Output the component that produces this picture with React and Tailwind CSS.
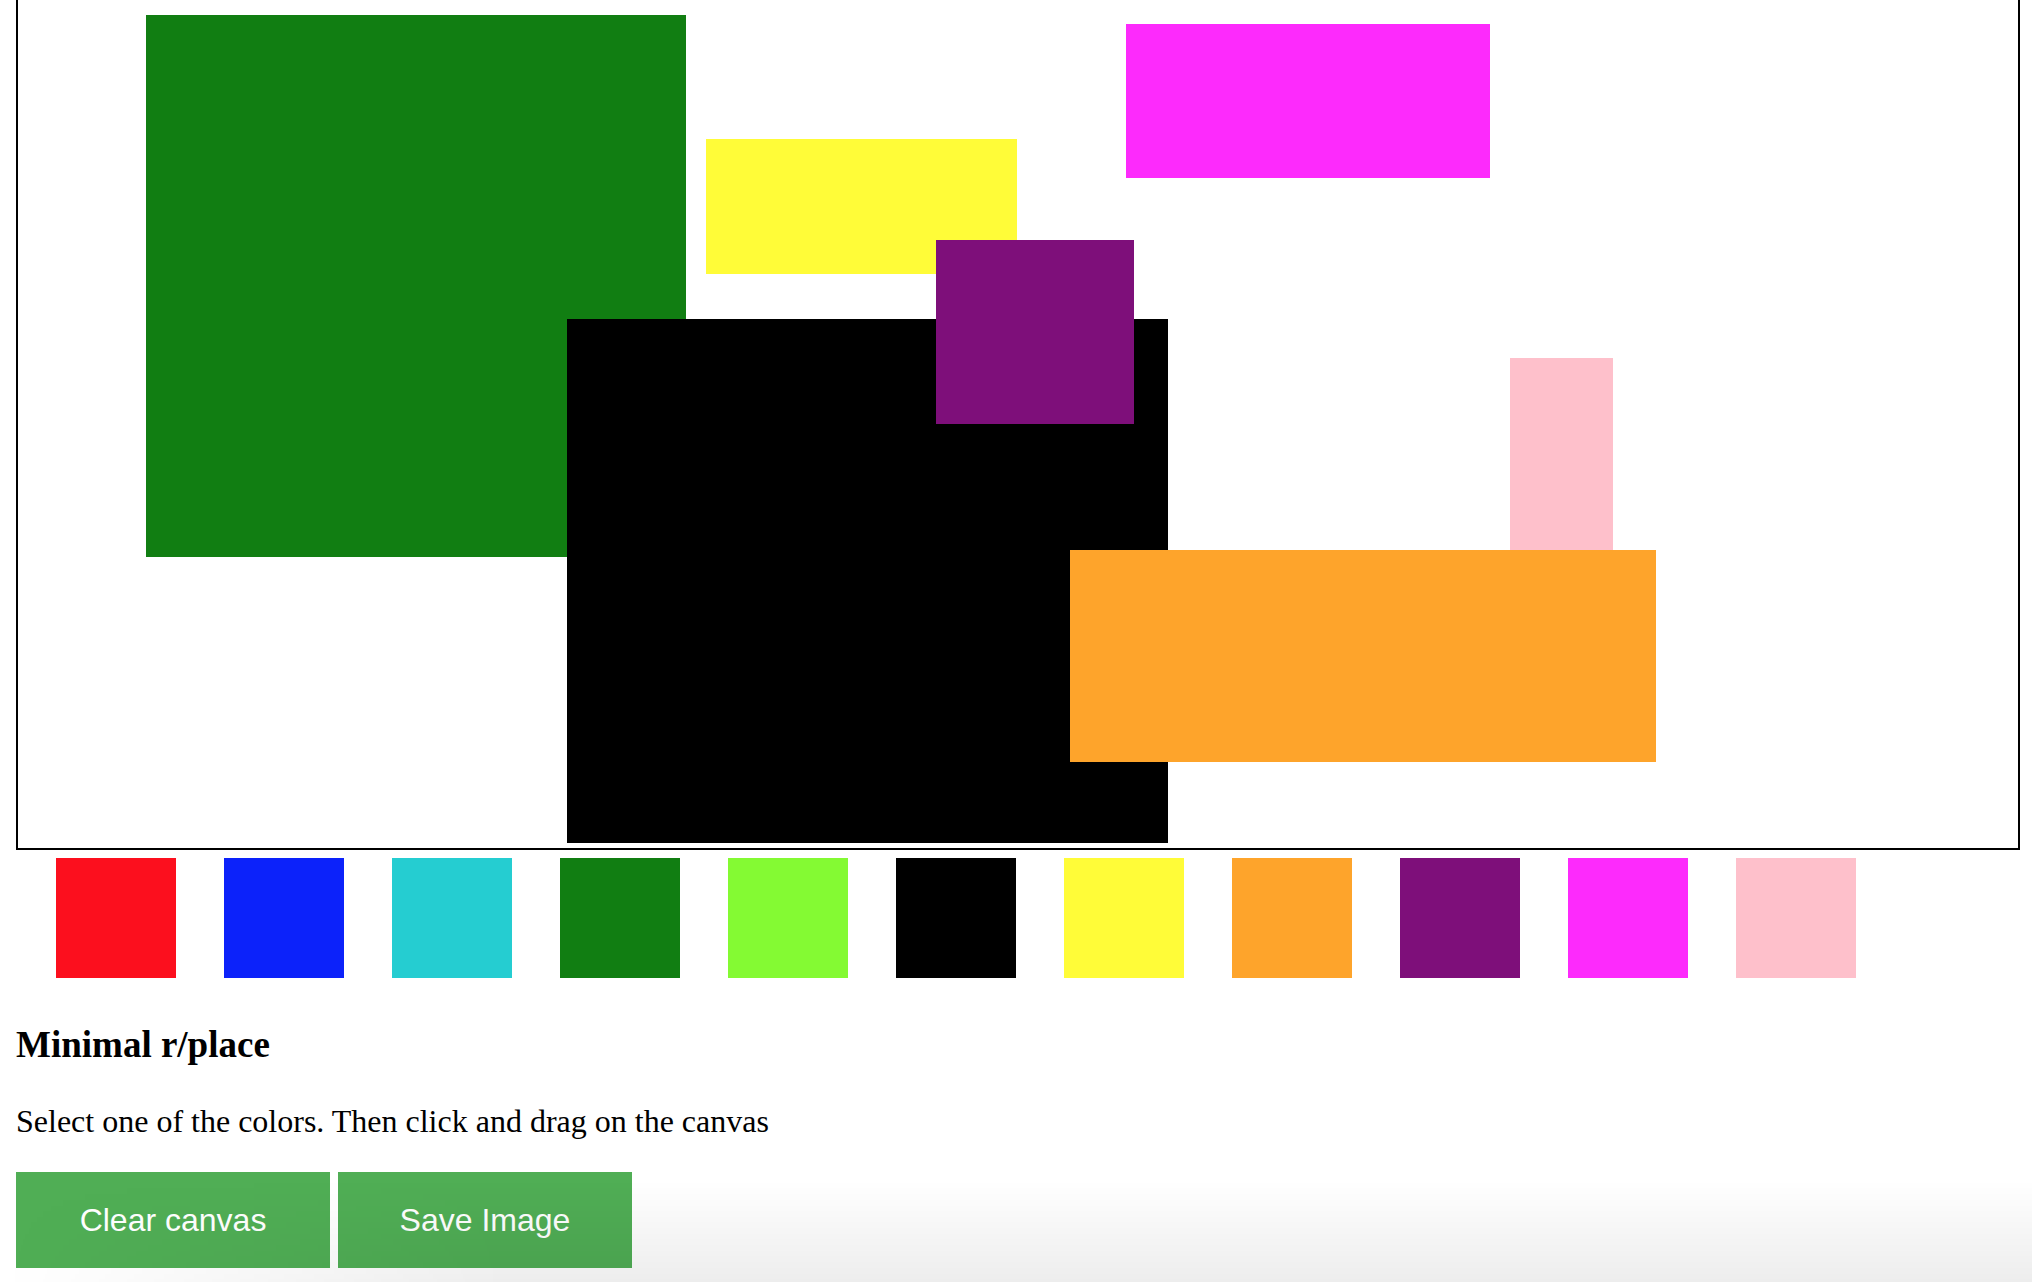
import React from 'react';

const COLORS = [
  { name: 'red', bg: 'bg-[#fc0f1e]' },
  { name: 'blue', bg: 'bg-[#0c22fa]' },
  { name: 'darkturquoise', bg: 'bg-[#25cdd1]' },
  { name: 'green', bg: 'bg-[#117e12]' },
  { name: 'lime', bg: 'bg-[#84fa33]' },
  { name: 'black', bg: 'bg-black' },
  { name: 'yellow', bg: 'bg-[#fffc38]' },
  { name: 'orange', bg: 'bg-[#fea42b]' },
  { name: 'purple', bg: 'bg-[#7e0f7a]' },
  { name: 'magenta', bg: 'bg-[#fd2afc]' },
  { name: 'pink', bg: 'bg-[#fec0cb]' },
];

// strokes already painted on the canvas, in draw order
const STROKES = [
  { id: 1, cls: 'left-[128px] top-[15px] w-[540px] h-[542px] bg-[#117e12]' },
  { id: 2, cls: 'left-[688px] top-[139px] w-[311px] h-[135px] bg-[#fffc38]' },
  { id: 3, cls: 'left-[549px] top-[319px] w-[601px] h-[524px] bg-black' },
  { id: 4, cls: 'left-[918px] top-[240px] w-[198px] h-[184px] bg-[#7e0f7a]' },
  { id: 5, cls: 'left-[1492px] top-[358px] w-[103px] h-[200px] bg-[#fec0cb]' },
  { id: 6, cls: 'left-[1052px] top-[550px] w-[586px] h-[212px] bg-[#fea42b]' },
  { id: 7, cls: 'left-[1108px] top-[24px] w-[364px] h-[154px] bg-[#fd2afc]' },
];

const App = () => {
  return (
    <div className="relative min-h-[1282px] bg-white px-4 text-black font-['Liberation_Serif',serif]">
      {/* Canvas */}
      <div className="relative w-[2004px] h-[850px] border-x-2 border-b-2 border-black bg-white overflow-hidden">
        {STROKES.map((s) => (
          <div key={s.id} className={`absolute ${s.cls}`} />
        ))}
      </div>

      {/* Palette */}
      <div className="flex gap-12 pl-10 mt-2">
        {COLORS.map((c) => (
          <button key={c.name} className={`w-[120px] h-[120px] ${c.bg}`} aria-label={c.name} />
        ))}
      </div>

      <h3 className="mt-[45px] text-[37px] leading-[44px] font-bold">Minimal r/place</h3>
      <p className="mt-[35px] text-[32px] leading-[38px]">
        Select one of the colors. Then click and drag on the canvas
      </p>

      <div className="flex gap-2 mt-8">
        <button className="w-[314px] bg-[#50ae55] text-white py-[30px] text-center text-[32px] leading-[36px] font-['Liberation_Sans',Arial,sans-serif]">
          Clear canvas
        </button>
        <button className="w-[294px] bg-[#50ae55] text-white py-[30px] text-center text-[32px] leading-[36px] font-['Liberation_Sans',Arial,sans-serif]">
          Save Image
        </button>
      </div>

      {/* bottom window shade */}
      <div className="pointer-events-none absolute left-0 right-0 top-[1180px] h-[102px] bg-[linear-gradient(to_bottom,rgba(0,0,0,0),rgba(0,0,0,0.07))] [mask-image:linear-gradient(to_right,transparent,black_25%)]" />
    </div>
  );
};

export default App;
